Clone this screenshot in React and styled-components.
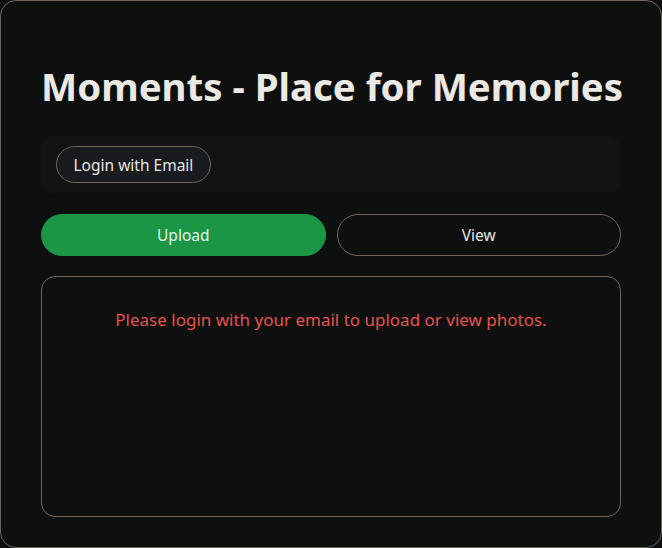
import React from "react";
import styled, { createGlobalStyle } from "styled-components";

const Global = createGlobalStyle`
  html, body { margin: 0; padding: 0; background: #0e1010; }
  * { box-sizing: border-box; }
  body { font-family: "Noto Sans", "Open Sans", sans-serif; }
`;

const Card = styled.div`
  width: 662px;
  height: 548px;
  background: #0e1010;
  border: 1px solid #6e6759;
  border-radius: 16px;
  padding: 57px 40px 30px 40px;
  display: flex;
  flex-direction: column;
`;

const Title = styled.h1`
  margin: 2px 0 24px 0;
  font-size: 38.4px;
  line-height: 52px;
  font-weight: 700;
  color: #ebe9e4;
  white-space: nowrap;
`;

const AuthBar = styled.div`
  display: flex;
  align-items: center;
  padding: 10px 15px;
  background: #121315;
  border-radius: 12px;
  height: 57px;
  margin-bottom: 21px;
`;

const PillButton = styled.button`
  font-family: inherit;
  font-size: 15.5px;
  color: #e8e6e2;
  background: #1a1b1e;
  border: 1px solid #6e6759;
  border-radius: 999px;
  height: 37px;
  padding: 0 16.5px;
  cursor: pointer;
`;

const Tabs = styled.div`
  display: grid;
  grid-template-columns: 1fr 1fr;
  gap: 11px;
  margin-bottom: 20px;
`;

const Tab = styled.button`
  font-family: inherit;
  font-size: 15.5px;
  height: 42px;
  border-radius: 999px;
  cursor: pointer;
  color: ${(p) => (p.$active ? "#e6f3ea" : "#e8e6e2")};
  background: ${(p) => (p.$active ? "#1a9645" : "transparent")};
  border: 1px solid ${(p) => (p.$active ? "#1a9645" : "#6e6759")};
`;

const Panel = styled.div`
  flex: 1;
  border: 1px solid #6e6759;
  border-radius: 14px;
  padding: 31px 10px;
  text-align: center;
`;

const Notice = styled.p`
  margin: 0;
  font-size: 17px;
  line-height: 23px;
  color: #e5534f;
  white-space: nowrap;
`;

export default function App() {
  return (
    <>
      <Global />
      <Card>
        <Title>Moments - Place for Memories</Title>
        <AuthBar>
          <PillButton>Login with Email</PillButton>
        </AuthBar>
        <Tabs>
          <Tab $active>Upload</Tab>
          <Tab>View</Tab>
        </Tabs>
        <Panel>
          <Notice>Please login with your email to upload or view photos.</Notice>
        </Panel>
      </Card>
    </>
  );
}
